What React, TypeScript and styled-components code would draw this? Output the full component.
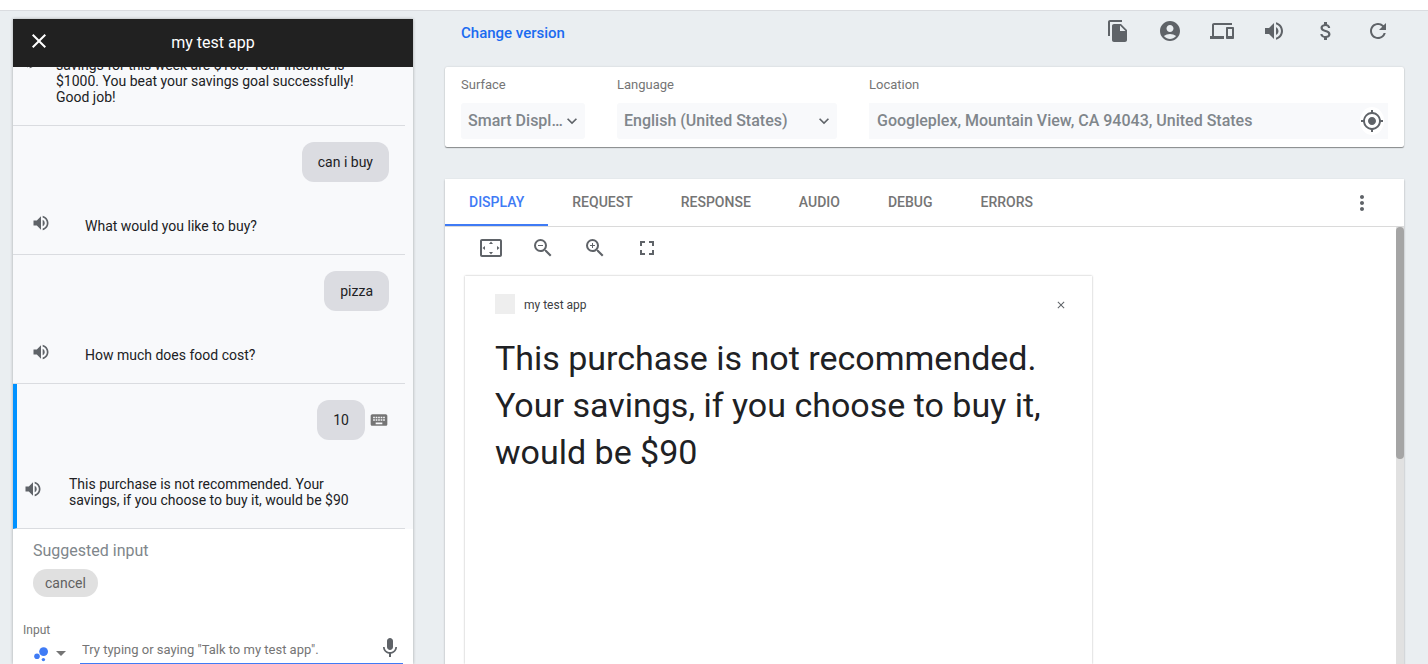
import React from 'react';
import styled, { createGlobalStyle, css } from 'styled-components';
import {
  MdAccountCircle, MdArrowDropDown, MdAttachMoney, MdClose, MdDevices, MdExpandMore, MdFileCopy,
  MdFullscreen, MdKeyboard, MdMic, MdMoreVert, MdMyLocation, MdRefresh, MdSettingsOverscan,
  MdVolumeUp, MdZoomIn, MdZoomOut,
} from 'react-icons/md';

const sans = 'Roboto, "Liberation Sans", sans-serif';

const GlobalStyle = createGlobalStyle`
  *, *::before, *::after { box-sizing: border-box; }
  body { margin: 0; background: #eaeef1; color: #202124; font-family: ${sans}; font-size: 14px; }
  button, input, select { font-family: inherit; margin: 0; }
`;

const Page = styled.div`
  display: flex;
  flex-direction: column;
  height: 100vh;
  overflow: hidden;
`;
const TopBar = styled.div`
  flex: none;
  height: 11px;
  background: #fff;
  border-bottom: 1px solid #dadce0;
`;
const Columns = styled.div`
  flex: 1;
  min-height: 0;
  display: flex;
  gap: 32px;
  padding: 0 24px 0 13px;
`;

const IconButton = styled.button`
  display: flex;
  align-items: center;
  justify-content: center;
  flex: none;
  padding: 0;
  border: 0;
  background: transparent;
  color: #5f6368;
  cursor: pointer;
`;

/* Conversation panel */
const ChatPanel = styled.section`
  flex: 0 0 400px;
  display: flex;
  flex-direction: column;
  margin-top: 8px;
  background: #fff;
  box-shadow: 0 0 3px rgba(0, 0, 0, 0.3);
`;
const ChatHeader = styled.header`
  flex: none;
  display: grid;
  grid-template-columns: 52px 1fr 52px;
  align-items: center;
  height: 48px;
  background: #212121;
  color: #fff;
`;
const CloseButton = styled(IconButton)`
  color: #fff;
  padding-bottom: 4px;
`;
const ChatTitle = styled.h1`
  margin: 0;
  font-size: 16px;
  font-weight: 400;
  line-height: 24px;
  text-align: center;
`;
const Conversation = styled.div`
  flex: 1;
  min-height: 0;
  display: flex;
  flex-direction: column;
  justify-content: flex-end;
  overflow: hidden;
  padding-right: 8px;
  background: #f8f9fb;
`;
const Turn = styled.article<{ $active?: boolean }>`
  flex: none;
  display: flex;
  flex-direction: column;
  gap: 36px;
  padding: 16px 0 20px;
  border-bottom: 1px solid #dadce0;
  ${(p) => p.$active && css`border-left: 4px solid #0091ff;`}
`;
const Query = styled.div`
  display: flex;
  align-items: center;
  justify-content: flex-end;
  gap: 4px;
  padding-right: 16px;
  color: #757575;
`;
const Bubble = styled.span`
  padding: 12px 16px;
  border-radius: 12px;
  background: #dbdce1;
  color: #202124;
  line-height: 16px;
`;
const Reply = styled.div<{ $inset: number; $gap: number; $tall?: boolean }>`
  display: flex;
  align-items: center;
  gap: ${(p) => p.$gap}px;
  padding-left: ${(p) => p.$inset}px;
  line-height: 16px;
  height: ${(p) => (p.$tall ? '82px' : 'auto')};
`;
const SpeakButton = styled(IconButton)`
  height: 16px;
  padding-bottom: 6px;
`;
const ReplyText = styled.p<{ $end?: boolean }>`
  margin: 0;
  max-width: 310px;
  align-self: ${(p) => (p.$end ? 'flex-end' : 'auto')};
`;

const Composer = styled.form`
  flex: none;
  display: flex;
  flex-direction: column;
  align-items: flex-start;
  padding: 10px 10px 0;
`;
const SuggestTitle = styled.h2`
  margin: 0 0 6px 10px;
  font-size: 16px;
  font-weight: 400;
  line-height: 24px;
  color: #80868b;
`;
const Chip = styled.button`
  height: 28px;
  margin: 0 0 24px 10px;
  padding: 0 12px;
  border: 0;
  border-radius: 14px;
  background: #e0e0e0;
  color: #616161;
  font-size: 14px;
`;
const InputLabel = styled.label`
  font-size: 12px;
  line-height: 18px;
  color: #757575;
`;
const InputRow = styled.div`
  display: flex;
  align-self: stretch;
  height: 25px;
`;
const ModeButton = styled(IconButton)`
  width: 57px;
  justify-content: flex-start;
  padding: 2px 0 0 8px;
  color: #757575;
`;
const Field = styled.div`
  flex: 1;
  display: flex;
  align-items: center;
  min-width: 0;
  border-bottom: 1px solid #3f7bf5;
`;
const TextInput = styled.input`
  flex: 1;
  min-width: 0;
  padding: 0 2px 2px;
  border: 0;
  outline: 0;
  background: transparent;
  font-size: 13px;
  line-height: 16px;
  &::placeholder { color: #757575; opacity: 1; }
`;
const MicButton = styled(IconButton)`
  width: 26px;
  padding-bottom: 6px;
`;

/* Simulator */
const Simulator = styled.main`
  flex: 1;
  min-width: 0;
  display: flex;
  flex-direction: column;
`;
const ActionBar = styled.div`
  flex: none;
  display: flex;
  align-items: center;
  justify-content: space-between;
  height: 40px;
  margin-bottom: 16px;
  padding: 0 14px 0 16px;
`;
const VersionLink = styled.a`
  padding-top: 4px;
  color: #1a6bf0;
  font-size: 15px;
  font-weight: 500;
  text-decoration: none;
`;
const Actions = styled.div`
  display: flex;
  gap: 28px;
`;
const Card = styled.section`
  flex: none;
  display: flex;
  gap: 32px;
  height: 80px;
  padding: 8px 16px;
  border-radius: 2px;
  background: #fff;
  box-shadow: 0 1px 1px rgba(0, 0, 0, 0.4), 0 0 2px rgba(0, 0, 0, 0.15);
`;
const Setting = styled.div<{ $width?: number }>`
  flex: ${(p) => (p.$width ? `0 0 ${p.$width}px` : '1')};
  min-width: 0;
  display: flex;
  flex-direction: column;
  gap: 8px;
`;
const SettingLabel = styled.label`
  font-size: 13px;
  line-height: 20px;
  color: #757575;
`;
const Control = styled.div`
  display: grid;
  grid-template-columns: 1fr 26px;
  align-items: center;
  height: 36px;
  border-radius: 3px;
  background: #f8f9fb;
  color: #5f6368;
`;
const Select = styled.select`
  grid-area: 1 / 1 / 2 / 3;
  width: 100%;
  height: 36px;
  padding: 0 18px 2px 7px;
  border: 0;
  appearance: none;
  background: transparent;
  color: #80868b;
  font-size: 16px;
  font-weight: 500;
  text-overflow: ellipsis;
`;
const Chevron = styled(MdExpandMore)`
  grid-area: 1 / 2;
  justify-self: center;
  pointer-events: none;
`;
const LocationControl = styled.div`
  display: flex;
  align-items: center;
  height: 36px;
  padding: 0 4px 0 8px;
  background: #f8f9fb;
`;
const LocationInput = styled.input`
  flex: 1;
  min-width: 0;
  padding: 0 0 2px;
  border: 0;
  outline: 0;
  background: transparent;
  color: #80868b;
  font-size: 16px;
  font-weight: 500;
`;
const LocateButton = styled(IconButton)`
  padding: 2px 0;
  border-radius: 50%;
  background: #fff;
`;

const Workspace = styled.section`
  flex: 1;
  min-height: 0;
  display: flex;
  flex-direction: column;
  margin-top: 32px;
  background: #fff;
  box-shadow: 0 1px 2px rgba(0, 0, 0, 0.3);
`;
const TabBar = styled.div`
  flex: none;
  display: flex;
  align-items: stretch;
  height: 48px;
  padding-right: 30px;
  border-bottom: 1px solid #dadada;
`;
const Tab = styled.button<{ $active?: boolean }>`
  padding: 0 24px;
  border: 0;
  border-bottom: 2px solid ${(p) => (p.$active ? '#3f7bf5' : 'transparent')};
  background: transparent;
  color: ${(p) => (p.$active ? '#3f7bf5' : '#757575')};
  font-size: 14px;
  font-weight: 500;
`;
const MoreButton = styled(IconButton)`
  margin-left: auto;
`;
const Viewport = styled.div`
  flex: 1;
  min-height: 0;
  display: flex;
`;
const Canvas = styled.div`
  flex: 1;
  min-width: 0;
  display: flex;
  flex-direction: column;
  overflow: hidden;
`;
const Toolbar = styled.div`
  flex: none;
  display: flex;
  gap: 28px;
  padding: 9px 34px 16px;
`;
const Track = styled.div`
  flex: none;
  width: 8px;
  background: #e1e1e1;
`;
const Thumb = styled.div`
  width: 8px;
  height: 53%;
  border-radius: 4px;
  background: #a5a5a5;
`;
const Device = styled.div`
  flex: 1;
  width: 100%;
  max-width: 627px;
  margin-left: 20px;
  padding: 18px 25px 0 30px;
  box-shadow: 0 0 2px rgba(0, 0, 0, 0.3);
`;
const DeviceHeader = styled.div`
  display: flex;
  align-items: flex-start;
  gap: 9px;
  margin-bottom: 20px;
  font-size: 12px;
  line-height: 20px;
  color: #3c4043;
`;
const AppIcon = styled.div`
  width: 20px;
  height: 20px;
  background: #eee;
`;
const AppName = styled.span`
  padding-top: 1px;
`;
const DeviceClose = styled(IconButton)`
  align-self: center;
  margin-left: auto;
`;
const Speech = styled.p`
  margin: 0;
  font-size: 34px;
  line-height: 47px;
  color: #202124;
`;

const AssistantMark = () => (
  <svg width="18" height="24" viewBox="0 0 18 24" fill="#3f7bf5" aria-hidden="true">
    <circle cx="12.6" cy="10.6" r="4.4" />
    <circle cx="6" cy="15.3" r="2.8" />
    <circle cx="12.4" cy="18.6" r="1.7" />
  </svg>
);

const actions = [
  { label: 'Copy', Icon: MdFileCopy },
  { label: 'Account', Icon: MdAccountCircle },
  { label: 'Devices', Icon: MdDevices },
  { label: 'Volume', Icon: MdVolumeUp },
  { label: 'Transactions', Icon: MdAttachMoney },
  { label: 'Reset', Icon: MdRefresh },
];
const tools = [
  { label: 'Fit to view', Icon: MdSettingsOverscan },
  { label: 'Zoom out', Icon: MdZoomOut },
  { label: 'Zoom in', Icon: MdZoomIn },
  { label: 'Full screen', Icon: MdFullscreen },
];
const tabs = ['DISPLAY', 'REQUEST', 'RESPONSE', 'AUDIO', 'DEBUG', 'ERRORS'];

type TurnProps = {
  query?: string;
  typed?: boolean;
  active?: boolean;
  tall?: boolean;
  inset: number;
  gap: number;
  children: React.ReactNode;
};
const ChatTurn = ({ query, typed, active, tall, inset, gap, children }: TurnProps) => (
  <Turn $active={active}>
    {query && (
      <Query>
        <Bubble>{query}</Bubble>
        {typed && <MdKeyboard size={20} />}
      </Query>
    )}
    <Reply $inset={inset} $gap={gap} $tall={tall}>
      <SpeakButton type="button" aria-label="Play response"><MdVolumeUp size={20} /></SpeakButton>
      <ReplyText $end={tall}>{children}</ReplyText>
    </Reply>
  </Turn>
);

export default function App() {
  return (
    <>
      <GlobalStyle />
      <Page>
        <TopBar />
        <Columns>
          <ChatPanel>
            <ChatHeader>
              <CloseButton type="button" aria-label="Close"><MdClose size={24} /></CloseButton>
              <ChatTitle>my test app</ChatTitle>
            </ChatHeader>
            <Conversation>
              <ChatTurn inset={5} gap={18} tall>
                savings for this week are $100. Your income is<br />$1000. You beat your savings goal successfully!<br />Good job!
              </ChatTurn>
              <ChatTurn query="can i buy" inset={18} gap={34}>What would you like to buy?</ChatTurn>
              <ChatTurn query="pizza" inset={18} gap={34}>How much does food cost?</ChatTurn>
              <ChatTurn query="10" typed active inset={6} gap={26}>
                This purchase is not recommended. Your<br />savings, if you choose to buy it, would be $90
              </ChatTurn>
            </Conversation>
            <Composer onSubmit={(e) => e.preventDefault()}>
              <SuggestTitle>Suggested input</SuggestTitle>
              <Chip type="button">cancel</Chip>
              <InputLabel htmlFor="query">Input</InputLabel>
              <InputRow>
                <ModeButton type="button" aria-label="Input mode">
                  <AssistantMark />
                  <MdArrowDropDown size={24} />
                </ModeButton>
                <Field>
                  <TextInput id="query" type="text" placeholder={'Try typing or saying "Talk to my test app".'} />
                  <MicButton type="button" aria-label="Speak"><MdMic size={24} /></MicButton>
                </Field>
              </InputRow>
            </Composer>
          </ChatPanel>

          <Simulator>
            <ActionBar>
              <VersionLink href="#version">Change version</VersionLink>
              <Actions>
                {actions.map(({ label, Icon }) => (
                  <IconButton key={label} type="button" aria-label={label}><Icon size={24} /></IconButton>
                ))}
              </Actions>
            </ActionBar>

            <Card>
              <Setting $width={124}>
                <SettingLabel htmlFor="surface">Surface</SettingLabel>
                <Control>
                  <Select id="surface"><option>Smart Display</option></Select>
                  <Chevron size={20} />
                </Control>
              </Setting>
              <Setting $width={220}>
                <SettingLabel htmlFor="language">Language</SettingLabel>
                <Control>
                  <Select id="language"><option>English (United States)</option></Select>
                  <Chevron size={20} />
                </Control>
              </Setting>
              <Setting>
                <SettingLabel htmlFor="location">Location</SettingLabel>
                <LocationControl>
                  <LocationInput id="location" type="text" defaultValue="Googleplex, Mountain View, CA 94043, United States" />
                  <LocateButton type="button" aria-label="Use my location"><MdMyLocation size={24} /></LocateButton>
                </LocationControl>
              </Setting>
            </Card>

            <Workspace>
              <TabBar role="tablist">
                {tabs.map((name, i) => (
                  <Tab key={name} type="button" role="tab" aria-selected={i === 0} $active={i === 0}>{name}</Tab>
                ))}
                <MoreButton type="button" aria-label="More options"><MdMoreVert size={24} /></MoreButton>
              </TabBar>
              <Viewport>
                <Canvas>
                  <Toolbar>
                    {tools.map(({ label, Icon }) => (
                      <IconButton key={label} type="button" aria-label={label}><Icon size={24} /></IconButton>
                    ))}
                  </Toolbar>
                  <Device>
                    <DeviceHeader>
                      <AppIcon />
                      <AppName>my test app</AppName>
                      <DeviceClose type="button" aria-label="Close app"><MdClose size={12} /></DeviceClose>
                    </DeviceHeader>
                    <Speech>
                      This purchase is not recommended.<br />Your savings, if you choose to buy it,<br />would be $90
                    </Speech>
                  </Device>
                </Canvas>
                <Track><Thumb /></Track>
              </Viewport>
            </Workspace>
          </Simulator>
        </Columns>
      </Page>
    </>
  );
}
